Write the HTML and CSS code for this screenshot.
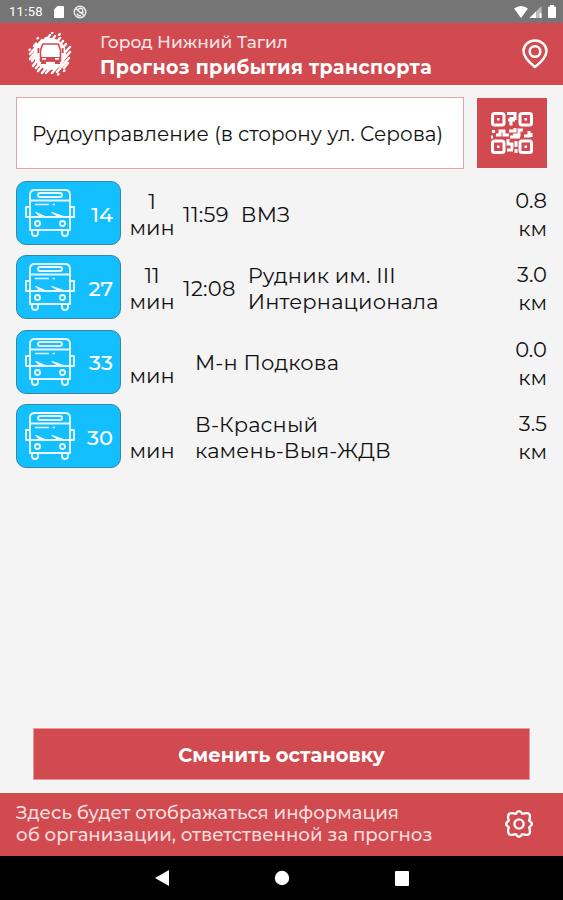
FILE: index.html
```html
<!DOCTYPE html>
<html lang="ru">
<head>
    <meta charset="UTF-8">
    <meta name="viewport" content="width=device-width, initial-scale=1.0">
    <title>Прогноз прибытия транспорта</title>
    <link rel="stylesheet" href="styles.css">
</head>
<body>
    <svg class="sprite" width="0" height="0">
        <symbol id="bus" viewBox="0 0 50 50">
            <g fill="none" stroke="currentColor" stroke-width="1.900" stroke-linejoin="round" opacity=".9">
                <path d="M5 42V7q0-5 5-5h30q5 0 5 5v35z"/>
                <rect x="13" y="5" width="24" height="4" rx="2"/>
                <path d="M5 12.500h40M1 29h48M5 19H1v10h4M45 19h4v10h-4"/>
                <path d="M10 16.500h14M27.500 16.500h2.500" stroke-width="1.500"/>
                <path fill="currentColor" d="M11 24.500l9 4h-5zM27 24.500l13 4.500h-6z" stroke-width="1.200"/>
                <circle cx="12.500" cy="35.500" r="2.500"/>
                <circle cx="37.500" cy="35.500" r="2.500"/>
                <path d="M7 42v3q0 3 3 3t3-3v-3M37 42v3q0 3 3 3t3-3v-3"/>
            </g>
        </symbol>
    </svg>

    <div class="screen">
        <div class="status-bar">
            <span class="clock">11:58</span>
            <svg class="sd" width="10" height="12" viewBox="0 0 10 12"><path fill="#fff" d="M3.500 0H9q1 0 1 1v10q0 1-1 1H1q-1 0-1-1V3.500z"/></svg>
            <svg width="14" height="14" viewBox="0 0 14 14" fill="none" stroke="#eee">
                <circle cx="7" cy="7" r="5.800" stroke-width="1.400"/>
                <path d="M3 3.500l8 7M4.500 6.500a3 3 0 0 1 5-2.500l.5 3.500H6M4 8.500a3.200 3.200 0 0 0 4 2" stroke-width="1.400"/>
            </svg>
            <svg class="signals" width="42" height="14" viewBox="0 0 42 14">
                <path fill="#fff" d="M0 3.500q7-5 14 0L7 13z"/>
                <path fill="#bbb" d="M27.500 1v12H15.500z"/>
                <path fill="#fff" d="M22 6.500V13h-6.500zM25.500 8h2v5h-2z"/>
                <path fill="#fff" d="M36 0h4v1.500h1q1 0 1 1V12q0 1-1 1h-6q-1 0-1-1V2.500q0-1 1-1h1z"/>
            </svg>
        </div>

        <header class="header">
            <svg class="logo" width="44" height="44" viewBox="0 0 44 44">
                <circle cx="22" cy="22" r="16" fill="#fff"/>
                <g stroke="#fff" stroke-width="2.400" stroke-linecap="round">
                    <path d="M6 14l2-2.500M2 22L14 8M2 27L18 6M4 29L22 3M5 34L27 4M8 36L32 6M10 39L35 9M14 41L38 12M18 41L42 15M24 41L42 20M29 40L41 26M36 36l4-5M9.500 6.500l.5-.5M24 1l.3-.3M31 3l.8-.8M36 39l.3-.3M1.500 18l.5-.5M30 42.500l.5-.5"/>
                </g>
                <path fill="#fff" stroke="#d14a50" stroke-width="1.600" stroke-linejoin="round" d="M14 14q0-2 2-2h13q2 0 2 2l1.500 4V29h-20V18z"/>
                <path fill="#d14a50" d="M12.500 25h20v4.500h-20zM13 29h5v3h-5zM27 29h5v3h-5zM9.500 16h1.800v5H9.500zM33.800 16h1.800v5h-1.800z"/>
                <path fill="#fff" d="M14 26h4v1.800h-4zM27 26h4v1.800h-4z"/>
            </svg>
            <div class="titles">
                <div class="city">Город Нижний Тагил</div>
                <h1>Прогноз прибытия транспорта</h1>
            </div>
            <svg class="pin" width="26" height="30" viewBox="0 0 26 30" fill="none" stroke="#fff" stroke-width="2.500" stroke-linejoin="round">
                <path d="M13 28Q1.500 19 1.500 12a11.500 10.500 0 0 1 23 0Q24.500 19 13 28z"/>
                <circle cx="13" cy="12.500" r="5.300"/>
            </svg>
        </header>

        <main class="content">
            <div class="stop">
                <div class="stop-name"><span>Рудоуправление (в сторону ул. Серова)</span></div>
                <div class="qr">
                    <svg width="42" height="42" viewBox="0 0 42 42" fill="none" stroke="#fff" stroke-width="3">
                        <rect x="1.500" y="1.500" width="11.500" height="11.500" rx="2"/>
                        <rect x="29" y="1.500" width="11.500" height="11.500" rx="2"/>
                        <rect x="1.500" y="29" width="11.500" height="11.500" rx="2"/>
                        <rect x="29" y="29" width="11.500" height="11.500" rx="2"/>
                        <path fill="#fff" stroke="none" d="M6 6h2.500v2.500H6zM33.500 6H36v2.500h-2.500zM6 33.500h2.500V36H6zM33.500 33.500H36V36h-2.500z"/>
                        <path stroke-width="3" d="M16 1.500h8v5h-4v7M17 8h7M1 19.500h3M0 25h2M5 23h4v-4h4v4h5M18 19h6v-3M22 23h6v-5h4M19 25h10M33 24h5v-5M40 21v4M17 27v5h4v5M16 38h6M25 29v6M25 37v4"/>
                    </svg>
                </div>
            </div>

            <div class="routes">
                <div class="route">
                    <div class="badge"><svg><use href="#bus"/></svg><span>14</span></div>
                    <div class="wait"><span>1</span><span>мин</span></div>
                    <div class="time">11:59</div>
                    <div class="dest">ВМЗ</div>
                    <div class="distance">0.8<br>км</div>
                </div>
                <div class="route">
                    <div class="badge"><svg><use href="#bus"/></svg><span>27</span></div>
                    <div class="wait"><span>11</span><span>мин</span></div>
                    <div class="time">12:08</div>
                    <div class="dest">Рудник им. III<br>Интернационала</div>
                    <div class="distance">3.0<br>км</div>
                </div>
                <div class="route">
                    <div class="badge"><svg><use href="#bus"/></svg><span>33</span></div>
                    <div class="wait"><span></span><span>мин</span></div>
                    <div class="time"></div>
                    <div class="dest">М-н Подкова</div>
                    <div class="distance">0.0<br>км</div>
                </div>
                <div class="route">
                    <div class="badge"><svg><use href="#bus"/></svg><span>30</span></div>
                    <div class="wait"><span></span><span>мин</span></div>
                    <div class="time"></div>
                    <div class="dest">В-Красный<br>камень-Выя-ЖДВ</div>
                    <div class="distance">3.5<br>км</div>
                </div>
            </div>

            <button type="button" class="change-stop">Сменить остановку</button>
        </main>

        <footer class="footer">
            <p>Здесь будет отображаться информация<br>об организации, ответственной за прогноз</p>
            <svg width="30" height="30" viewBox="0 0 30 30" fill="none" stroke="#fff" stroke-width="2.400" stroke-linejoin="round">
                <path d="M11.800 4.800Q15-.5 18.200 4.800Q24.200 3.300 25.200 5Q26.700 6.500 25.200 11.800Q30.500 15 25.200 18.200Q26.700 23.500 25.200 25Q23.500 26.700 18.200 25.200Q15 30.500 11.800 25.200Q6.500 26.700 5 25Q3.300 23.500 4.800 18.200Q-.5 15 4.800 11.800Q3.300 6.500 5 5Q6.500 3.300 11.800 4.800z"/>
                <circle cx="15" cy="15" r="4.600"/>
            </svg>
        </footer>

        <nav class="nav-bar">
            <svg width="16" height="16" viewBox="0 0 16 16"><path fill="#fff" d="M15 0v16L1 8z"/></svg>
            <svg width="16" height="16" viewBox="0 0 16 16"><circle fill="#fff" cx="8" cy="8" r="7.200"/></svg>
            <svg width="16" height="16" viewBox="0 0 16 16"><rect fill="#fff" x="1" y="1" width="14" height="15" rx="1"/></svg>
        </nav>
    </div>
</body>
</html>
```
FILE: styles.css
```css
:root {
    --red: #d14a50;
    --blue: #14bfff;
    --background: #f4f4f4;
}

* {
    margin: 0;
    padding: 0;
    box-sizing: border-box;
}

body {
    font-family: "Montserrat", "Inter", sans-serif;
    background-color: var(--background);
    color: #111;
}

svg {
    display: block;
    flex-shrink: 0;
}

.sprite {
    position: absolute;
}

.screen {
    height: 900px;
    display: flex;
    flex-direction: column;
    overflow: hidden;
    white-space: nowrap;
}

.status-bar {
    height: 23px;
    padding: 0 7px 0 9px;
    display: flex;
    align-items: center;
    background-color: #757575;
    color: #fff;
    font-family: Roboto, sans-serif;
    font-size: 13px;
    letter-spacing: 0.3px;
}

.clock {
    width: 45px;
}

.sd {
    margin-right: 9px;
}

.signals {
    margin-left: auto;
}

.header {
    height: 62px;
    padding: 0 15px 0 28px;
    display: flex;
    align-items: center;
    background-color: var(--red);
    color: #fff;
}

.titles {
    margin-left: 28px;
    padding-top: 3px;
}

.city {
    font-size: 17px;
    line-height: 24px;
    color: #fbe3e3;
    font-weight: 500;
}

h1 {
    font-size: 19px;
    line-height: 27px;
    font-weight: 700;
    letter-spacing: 0.4px;
}

.pin {
    margin-left: auto;
}

.content {
    flex: 1;
    display: flex;
    flex-direction: column;
    padding: 12px 16px 13px;
}

.stop {
    display: flex;
    justify-content: space-between;
}

.stop-name {
    width: 448px;
    height: 72px;
    padding: 2px 0 0 15px;
    display: flex;
    align-items: center;
    background-color: #fff;
    border: 1px solid #e3a4a8;
    font-size: 20px;
}

.qr {
    width: 70px;
    height: 70px;
    margin-top: 1px;
    display: flex;
    align-items: center;
    justify-content: center;
    background-color: var(--red);
}

.routes {
    display: flex;
    flex-direction: column;
    gap: 10.400px;
    margin-top: 12px;
    font-size: 21px;
    line-height: 26px;
}

.route {
    height: 64px;
    display: flex;
    align-items: center;
}

.badge {
    width: 105px;
    height: 64px;
    padding: 0 7px 0 8px;
    display: flex;
    align-items: center;
    justify-content: space-between;
    background-color: var(--blue);
    border: 1px solid #3687a5;
    border-radius: 10px;
    color: #fff;
    font-weight: 500;
}

.badge svg {
    width: 50px;
    height: 50px;
}

.badge span {
    padding-top: 3px;
}

.wait {
    width: 62px;
    padding-top: 3px;
    display: flex;
    flex-direction: column;
    align-items: center;
}

.wait span {
    height: 26px;
}

.time {
    letter-spacing: 0.3px;
    padding-top: 3px;
}

.dest {
    margin-left: 12px;
    padding-top: 3px;
    letter-spacing: 0.15px;
}

.distance {
    margin-left: auto;
    padding-top: 4px;
    line-height: 28px;
    text-align: right;
}

.change-stop {
    height: 52px;
    margin: auto 17px 0;
    padding-top: 2px;
    background-color: var(--red);
    border: 1px solid #e69a9e;
    color: #fff;
    font-family: inherit;
    font-size: 19.500px;
    font-weight: 700;
}

.footer {
    height: 63px;
    padding: 0 29px 1px 16px;
    display: flex;
    align-items: center;
    justify-content: space-between;
    background-color: var(--red);
    color: #fbdcdc;
    font-size: 18.200px;
    font-weight: 500;
    line-height: 22px;
}

.nav-bar {
    height: 44px;
    display: flex;
    align-items: center;
    justify-content: center;
    gap: 104px;
    background-color: #000;
}
```
